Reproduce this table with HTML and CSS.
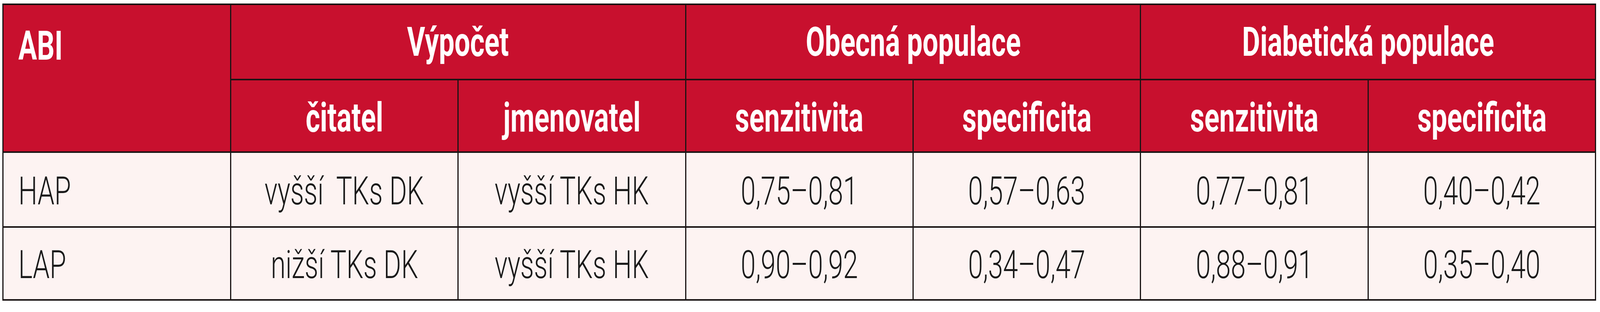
FILE: index.html
```html
<!DOCTYPE html>
<html lang="cs">
<head>
<meta charset="utf-8">
<title>ABI</title>
<link rel="stylesheet" href="styles.css">
</head>
<body>
<div class="wrap">
<table class="abi">
<colgroup>
<col class="c"><col class="c"><col class="c"><col class="c"><col class="c"><col class="c"><col class="c">
</colgroup>
<thead>
<tr class="h1">
<th rowspan="2" class="first top"><span class="t">ABI</span></th>
<th colspan="2"><span class="t">Výpočet</span></th>
<th colspan="2"><span class="t">Obecná populace</span></th>
<th colspan="2"><span class="t">Diabetická populace</span></th>
</tr>
<tr class="h2">
<th><span class="t">čitatel</span></th>
<th><span class="t">jmenovatel</span></th>
<th><span class="t">senzitivita</span></th>
<th><span class="t">specificita</span></th>
<th><span class="t">senzitivita</span></th>
<th><span class="t">specificita</span></th>
</tr>
</thead>
<tbody>
<tr class="r1">
<td class="first"><span class="t">HAP</span></td>
<td><span class="t">vyšší&nbsp; TKs DK</span></td>
<td><span class="t">vyšší TKs HK</span></td>
<td><span class="t">0,75–0,81</span></td>
<td><span class="t">0,57–0,63</span></td>
<td><span class="t">0,77–0,81</span></td>
<td><span class="t">0,40–0,42</span></td>
</tr>
<tr class="r2">
<td class="first"><span class="t">LAP</span></td>
<td><span class="t">nižší TKs DK</span></td>
<td><span class="t">vyšší TKs HK</span></td>
<td><span class="t">0,90–0,92</span></td>
<td><span class="t">0,34–0,47</span></td>
<td><span class="t">0,88–0,91</span></td>
<td><span class="t">0,35–0,40</span></td>
</tr>
</tbody>
</table>
</div>
</body>
</html>
```
FILE: styles.css
```css
:root {
  --s: tan(atan2(100vw, 6011px));
}
html, body {
  margin: 0;
  padding: 0;
  background: #ffffff;
}
.wrap {
  padding: 9px calc(9px * var(--s));
}
.abi {
  width: calc(5988px * var(--s));
  table-layout: fixed;
  border-collapse: collapse;
  border-style: solid;
  border-color: #1a1414;
  border-width: 4px 3px;
  font-family: Roboto, "Liberation Sans", sans-serif;
}
.abi th, .abi td {
  border-style: solid;
  border-color: #1a1414;
  border-width: 4px 3px;
  padding: 0 calc(20px * var(--s));
  text-align: center;
  vertical-align: middle;
  white-space: nowrap;
}
.t {
  display: inline-block;
  margin: 0 -600px;
  transform: scaleX(var(--s));
  transform-origin: 50% 50%;
}
.abi th {
  background: #c8102e;
  color: #ffffff;
  font-weight: 700;
  font-size: 104px;
}
.abi td {
  background: #fdf3f2;
  color: #1a1a1a;
  font-weight: 300;
  font-size: 101px;
  padding-top: 6px;
}
.abi .first {
  text-align: left;
  padding-left: calc(56px * var(--s));
}
.abi .first .t {
  margin: 0;
  transform-origin: 0 50%;
}
.abi .top {
  vertical-align: top;
  padding-top: 44px;
}
.h1 { height: 193px; }
.h2 { height: 186px; }
.h2 th { padding-top: 8px; }
.r1 { height: 192px; }
.r2 { height: 187px; }
```
